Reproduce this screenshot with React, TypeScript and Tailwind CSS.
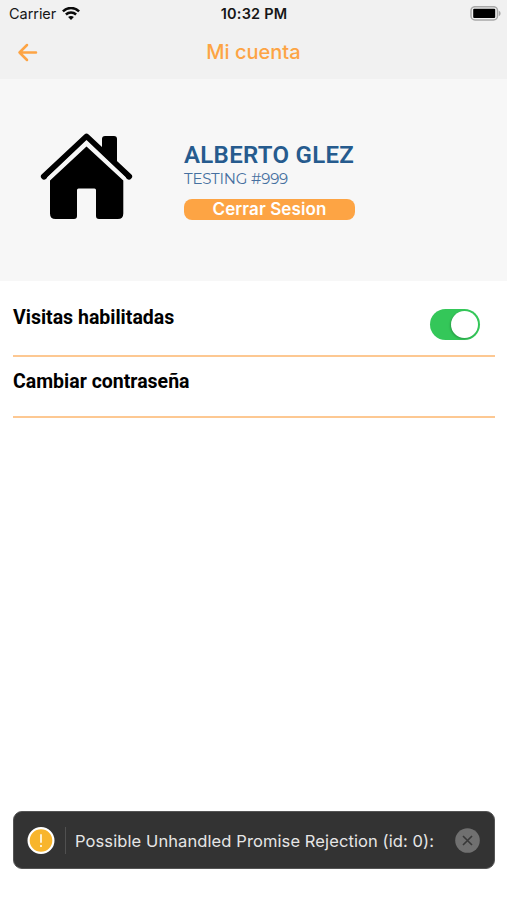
import React from "react";

function StatusBar() {
  return (
    <div className="grid h-[27px] grid-cols-3 items-center pl-[9px] pr-[6px] text-[#161616]">
      <div className="flex items-center gap-[6px]">
        <span className="text-[14.5px] leading-[27px] tracking-[-0.05px]">Carrier</span>
        <svg width="18" height="14" viewBox="0 0 18 14" fill="none" stroke="#0a0a0a" strokeWidth="2.5">
          <path d="M.9 4.3C5.5-.1 12.5-.1 17.1 4.3" />
          <path d="M3.9 7.5c2.9-2.7 7.3-2.7 10.2 0" />
          <path d="M9 13 6.1 10.1c1.7-1.5 4.1-1.5 5.8 0Z" fill="#0a0a0a" stroke="none" />
        </svg>
      </div>
      <span className="whitespace-nowrap pr-[2px] text-center text-[14.5px] font-semibold leading-[27px] tracking-[0.2px]">
        10:32 PM
      </span>
      <svg className="justify-self-end" width="31" height="16" viewBox="0 0 31 16">
        <rect x="1" y="0.7" width="26.5" height="13.3" rx="4" fill="#f1f1f1" stroke="#a8a8a8" strokeWidth="1.5" />
        <rect x="3.2" y="2.7" width="22" height="9.3" rx="1" fill="#000" />
        <path d="M28.8 4.7c2.4 1 2.4 4.4 0 5.4Z" fill="#a8a8a8" />
      </svg>
    </div>
  );
}

function Header() {
  return (
    <header className="h-[79px] bg-[#f1f1f1]">
      <StatusBar />
      <div className="grid h-[51px] grid-cols-3 items-center px-[17px]">
        <svg width="21" height="20" viewBox="0 0 21 20" fill="none" stroke="#fda444" strokeWidth="2.5" strokeLinecap="round" strokeLinejoin="round">
          <path d="M19 9.5H2.5M10 2 2.5 9.5l7.5 7.5" />
        </svg>
        <h1 className="whitespace-nowrap text-center text-[20px] font-medium leading-[51px] text-[#fda444]">Mi cuenta</h1>
      </div>
    </header>
  );
}

function HouseIcon() {
  return (
    <svg width="94" height="90" viewBox="0 0 94 90">
      <path d="M62 24V7q0-3 3-3h9q3 0 3 3v29Z" />
      <path d="M4 44.5 46.5 4.8 89 44.5" fill="none" stroke="#000" strokeWidth="6.2" strokeLinecap="round" strokeLinejoin="round" />
      <path d="M46.5 8 86 45.5 83 49 46.5 14 10 49 7 45.5Z" fill="#f7f7f7" />
      <path d="M46.5 14.5 83.3 48.5V81.5q0 5.5-5.5 5.5H59q-3 0-3-3V58q0-1.5-1.5-1.5h-16q-1.5 0-1.5 1.5v26q0 3-3 3H15.500q-5.500 0-5.500-5.500V48.500Z" />
    </svg>
  );
}

function Profile() {
  return (
    <section className="flex h-[202px] items-start bg-[#f7f7f7] pl-[40px] pt-[53px]">
      <HouseIcon />
      <div className="ml-[50px] flex w-[171px] flex-col pt-[9px]">
        <h2 className="whitespace-nowrap font-['Roboto',sans-serif] text-[24px] font-semibold leading-[29px] tracking-[0.3px] text-[#265b8e]">ALBERTO GLEZ</h2>
        <p className="whitespace-nowrap font-['Montserrat','Inter',sans-serif] text-[15px] font-normal leading-[18px] tracking-[-0.2px] text-[#4670a0]">TESTING #999</p>
        <button className="mt-[11px] h-[21px] rounded-[8px] bg-[#fda444] text-[17px] font-semibold leading-[21px] tracking-[0.1px] text-white">
          Cerrar Sesion
        </button>
      </div>
    </section>
  );
}

function Toast() {
  return (
    <div className="ml-[13px] mr-[12px] mb-[31px] flex h-[58px] items-center rounded-[9px] border border-[#555] bg-[#333] pl-[13px] pr-[14px]">
      <svg width="28" height="28" viewBox="0 0 28 28">
        <circle cx="14" cy="14.5" r="12.4" fill="#f8b52c" stroke="#fff" strokeWidth="2.2" />
        <path d="M14 8.2v8.5M14 18.9v2" stroke="#fff3d6" strokeWidth="1.9" />
      </svg>
      <div className="ml-[10px] h-[27px] w-px bg-[#505050]" />
      <span className="ml-[9px] whitespace-nowrap pt-[2px] text-[16.5px] leading-[24px] tracking-[0.1px] text-[#e6e6e6]">
        Possible Unhandled Promise Rejection (id: 0):
      </span>
      <svg className="ml-auto" width="25" height="25" viewBox="0 0 25 25">
        <circle cx="12.5" cy="12.5" r="12.3" fill="#707070" />
        <path d="m8 8 9 9M17 8l-9 9" stroke="#383838" strokeWidth="1.6" />
      </svg>
    </div>
  );
}

export default function App() {
  return (
    <div className="flex h-[900px] w-[507px] flex-col overflow-hidden bg-white font-['Inter',sans-serif]">
      <Header />
      <Profile />
      <main className="flex-1 pl-[13px] pr-[12px] font-['Roboto',sans-serif] text-[19.5px] font-bold text-black">
        <div className="flex h-[76px] justify-between border-b-2 border-[#fdc892] pr-[15px]">
          <span className="pt-[25px] leading-[24px]">Visitas habilitadas</span>
          <button aria-label="Visitas habilitadas" className="mt-[28px] flex h-[31px] w-[50px] items-center justify-end rounded-full bg-[#34c759] pr-[2px]">
            <span className="size-[27px] rounded-full bg-white shadow-[-1px_1px_2px_rgba(0,0,0,0.2)]" />
          </button>
        </div>
        <div className="h-[61px] border-b-2 border-[#fdc892] pt-[13px] leading-[24px]">Cambiar contraseña</div>
      </main>
      <Toast />
    </div>
  );
}
